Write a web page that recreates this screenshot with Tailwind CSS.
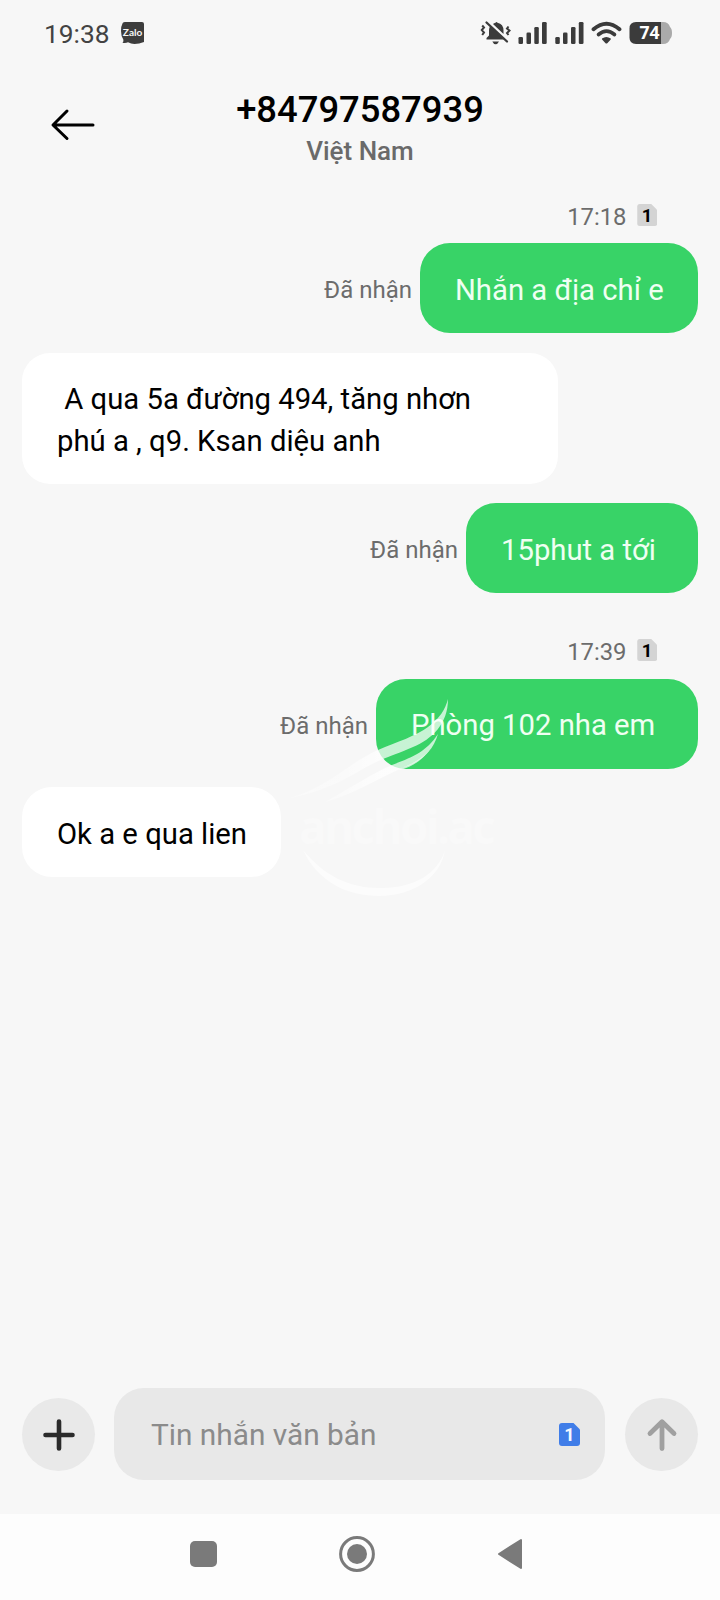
<!DOCTYPE html>
<html lang="vi">
<head>
<meta charset="utf-8">
<title>+84797587939</title>
<script src="https://cdn.jsdelivr.net/npm/@tailwindcss/browser@4"></script>
</head>
<body class="bg-[#f7f7f7]">
<div class="relative flex h-[1600px] w-[720px] flex-col overflow-hidden bg-[#f7f7f7] font-['Roboto',sans-serif]">

  <!-- Status bar -->
  <div class="flex h-[66px] items-center justify-between pl-[44px] pr-[46px]">
    <div class="flex items-center gap-[11px]">
      <span class="pt-[2px] text-[26.3px] leading-[32px] text-[#434343]">19:38</span>
      <svg class="h-[23px] w-[23px]" viewBox="0 0 23 23"><path d="M4 0H21Q23 0 23 2V20Q18 22 13.500 22Q10 22 7 20.300Q5 21.300 1.500 20.800Q3 19.500 2.300 17.500Q0 14 0 9Q0 4 1.700 1Q2.500 0 4 0Z" fill="#3d3d3d"/><text x="1.800" y="14" font-family="Lato" font-weight="700" font-size="10" textLength="19.500" lengthAdjust="spacingAndGlyphs" fill="#f5f5f5">Zalo</text></svg>
    </div>
    <svg class="h-[28px] w-[194px]" viewBox="0 0 194 28" fill="#3b3b3b">
      <!-- Muted bell -->
      <path d="M6.500 20.500V19L9 16.500V11Q9 8.500 10.500 7L24 20.500ZM13 5Q14 4 15.500 3.700Q16.500 2.500 17.500 3.700Q23.500 5 23.500 11.500V15Z"/>
      <path d="M12.300 22.500H19Q17.500 25.300 15.600 25.300Q13.700 25.300 12.300 22.500Z"/>
      <path d="M6.500 3.500L27 22.500" stroke="#3b3b3b" stroke-width="2.300" stroke-linecap="round"/>
      <path d="M2.200 6.500L4 8.500L1.800 11L4 13.500L2.200 16M28.500 7.500L27 9.500L29.500 11.500L27 14L28.500 16" fill="none" stroke="#3b3b3b" stroke-width="2"/>
      <!-- Signal bars -->
      <rect x="38.500" y="18" width="4.500" height="7" rx="1.300"/><rect x="46.500" y="13.500" width="4.500" height="11.500" rx="1.300"/><rect x="54.300" y="8" width="4.500" height="17" rx="1.300"/><rect x="62" y="3" width="4.700" height="22" rx="1.300"/>
      <rect x="75.300" y="18" width="4.500" height="7" rx="1.300"/><rect x="83" y="13.500" width="4.500" height="11.500" rx="1.300"/><rect x="91" y="8" width="4.500" height="17" rx="1.300"/><rect x="98.800" y="3" width="4.700" height="22" rx="1.300"/>
      <!-- Wi-Fi -->
      <path d="M113.500 10.300Q126.500 -1 139.500 10.300" fill="none" stroke="#3b3b3b" stroke-width="3.800" stroke-linecap="round"/>
      <path d="M118.500 15.500Q126.500 8.800 134.500 15.500" fill="none" stroke="#3b3b3b" stroke-width="3.600" stroke-linecap="round"/>
      <path d="M122 19.600Q126.300 16.300 130.800 19.600Q131 20.300 130.500 20.800L127.500 24Q126.400 25 125.300 24L122.300 20.800Q121.700 20.300 122 19.600Z"/>
      <!-- Battery -->
      <path d="M178 3H183Q188.500 3 190 8Q192 9.500 192 14Q192 18.500 190 20Q188.500 25 183 25H178Z" fill="#aaa"/>
      <path d="M156 3H181V25H156Q149.500 25 149.500 18.500V9.500Q149.500 3 156 3Z"/>
      <text x="159.500" y="20.200" font-family="Open Sans" font-weight="700" font-size="17" textLength="20" lengthAdjust="spacingAndGlyphs" fill="#fff">74</text>
    </svg>
  </div>

  <!-- Header -->
  <header class="grid h-[122px] grid-cols-[100px_1fr_100px] items-start">
    <svg class="ml-[50px] mt-[42px] h-[34px] w-[48px]" viewBox="0 0 48 34" fill="none" stroke="#000" stroke-width="3" stroke-linecap="round" stroke-linejoin="round"><path d="M43 17H3.500M17 3L3 17L17 30.500"/></svg>
    <div class="flex flex-col items-center pt-[22px]">
      <h1 class="text-[36.4px] font-medium leading-[44px] text-black">+84797587939</h1>
      <p class="mt-[4px] text-[26px] font-medium leading-[30px] text-[#6a6a6a]">Việt Nam</p>
    </div>
  </header>

  <!-- Conversation -->
  <main class="flex flex-1 flex-col px-[22px] text-[29.25px] leading-[42px]">
    <div class="flex h-[55px] items-start justify-end gap-[10px] pr-[41px] pt-[14px]">
      <span class="pt-px text-[23.8px] leading-[29px] text-[#6c6c6c]">17:18</span>
      <svg class="mt-[2px] h-[22px] w-[20.5px]" viewBox="0 0 20 22"><path d="M2.500 0H14L20 6V19.500Q20 22 17.500 22H2.500Q0 22 0 19.500V2.500Q0 0 2.500 0Z" fill="#d4d4d4"/><text x="4.500" y="18" font-family="Roboto" font-weight="700" font-size="18.500">1</text></svg>
    </div>
    <div class="flex items-center justify-end gap-[8px]">
      <span class="pt-[3px] text-[24px] leading-[30px] text-[#6c6c6c]">Đã nhận</span>
      <div class="h-[90px] w-[278px] rounded-[30px] bg-[#38d367] pl-[35px] pt-[26px] text-[#effff2]">Nhắn a địa chỉ e</div>
    </div>
    <div class="mt-[20px] h-[131px] w-[536px] whitespace-pre rounded-[28px] bg-white pl-[35px] pt-[25px] text-black"> A qua 5a đường 494, tăng nhơn
phú a , q9. Ksan diệu anh</div>
    <div class="mt-[19px] flex items-center justify-end gap-[8px]">
      <span class="pt-[3px] text-[24px] leading-[30px] text-[#6c6c6c]">Đã nhận</span>
      <div class="h-[90px] w-[232px] rounded-[30px] bg-[#38d367] pl-[35px] pt-[26px] text-[#effff2]">15phut a tới</div>
    </div>
    <div class="flex h-[86px] items-start justify-end gap-[10px] pr-[41px] pt-[44px]">
      <span class="pt-px text-[23.8px] leading-[29px] text-[#6c6c6c]">17:39</span>
      <svg class="mt-[2px] h-[22px] w-[20.5px]" viewBox="0 0 20 22"><path d="M2.500 0H14L20 6V19.500Q20 22 17.500 22H2.500Q0 22 0 19.500V2.500Q0 0 2.500 0Z" fill="#d4d4d4"/><text x="4.500" y="18" font-family="Roboto" font-weight="700" font-size="18.500">1</text></svg>
    </div>
    <div class="flex items-center justify-end gap-[8px]">
      <span class="pt-[3px] text-[24px] leading-[30px] text-[#6c6c6c]">Đã nhận</span>
      <div class="h-[90px] w-[322px] rounded-[30px] bg-[#38d367] pl-[35px] pt-[25px] text-[#effff2]">Phòng 102 nha em</div>
    </div>
    <div class="mt-[18px] h-[90px] w-[259px] rounded-[30px] bg-white pl-[35px] pt-[26px] text-black">Ok a e qua lien</div>
  </main>

  <!-- Composer -->
  <div class="flex h-[126px] items-start justify-between px-[22px]">
    <div class="mt-[10px] flex h-[73px] w-[73px] items-center justify-center rounded-full bg-[#e9e9e9]">
      <svg class="h-[32px] w-[32px]" viewBox="0 0 32 32"><path d="M16 2.500V29.500M2.500 16H29.500" stroke="#2b2b2b" stroke-width="4.600" stroke-linecap="round"/></svg>
    </div>
    <div class="mr-px flex h-[92px] w-[491px] items-center justify-between rounded-[30px] bg-[#e8e8e8] pl-[37px] pr-[25px]">
      <span class="pt-[2px] text-[29.8px] leading-[42px] text-[#8b8b8b]">Tin nhắn văn bản</span>
      <svg class="h-[23px] w-[21px]" viewBox="0 0 21 23"><path d="M3 0H14.500L21 6.500V20Q21 23 18 23H3Q0 23 0 20V3Q0 0 3 0Z" fill="#407de8"/><text x="5.300" y="18" font-family="Roboto" font-weight="700" font-size="18" fill="#f4f8ff">1</text></svg>
    </div>
    <div class="mt-[10px] flex h-[73px] w-[73px] items-center justify-center rounded-full bg-[#e8e8e8]">
      <svg class="h-[34px] w-[32px]" viewBox="0 0 32 34" fill="none" stroke="#a0a0a0" stroke-width="4.800" stroke-linecap="round"><path d="M16 4V30.500M4 15.500L16 3.800L28 15.500" stroke-linejoin="round"/></svg>
    </div>
  </div>

  <!-- System navigation -->
  <nav class="flex h-[86px] items-center justify-between bg-[#fdfdfd] pb-[6px] pl-[190px] pr-[197px]">
    <div class="h-[26px] w-[27px] rounded-[5px] bg-[#7a7a7a]"></div>
    <svg class="h-[36px] w-[36px]" viewBox="0 0 36 36"><circle cx="18" cy="18" r="16.400" fill="none" stroke="#7a7a7a" stroke-width="3"/><circle cx="18" cy="18" r="10" fill="#7a7a7a"/></svg>
    <svg class="h-[32px] w-[26px]" viewBox="0 0 26 32"><path d="M24 2V30L2 16Z" fill="#7a7a7a" stroke="#7a7a7a" stroke-width="2" stroke-linejoin="round"/></svg>
  </nav>

  <!-- Watermark -->
  <svg class="pointer-events-none absolute left-[280px] top-[690px] h-[220px] w-[230px]" viewBox="280 690 230 220" fill="#fff">
    <defs><linearGradient id="fade" gradientUnits="userSpaceOnUse" x1="378" y1="0" x2="340" y2="0"><stop offset="0" stop-color="#fff" stop-opacity=".72"/><stop offset="1" stop-color="#fff" stop-opacity=".35"/></linearGradient></defs>
    <path d="M448 699C448 724 432 739 413 747C400 753 389 756 381 760C360 768 340 788 290 798C330 786 350 762 378 750C397 742 416 736 428 727C440 718 445 710 448 699Z" fill="url(#fade)"/>
    <path d="M438 734C433 752 419 763 402 768C375 780 350 796 325 802C350 788 375 772 392 765C413 757 426 752 438 734Z" fill="url(#fade)"/>
    <path d="M430 750C421 761 412 767 400 770L398 769C412 765 421 759 430 750Z" opacity=".7"/>
    <path d="M303 850C318 882 347 896 379 896C415 896 441 876 445 850C438 873 415 888 381 888C347 888 324 875 303 850Z" opacity=".6"/>
    <text x="299" y="844" font-family="Open Sans" font-weight="700" font-size="46" textLength="197" opacity=".25">anchoi.ac</text>
  </svg>
</div>
</body>
</html>
